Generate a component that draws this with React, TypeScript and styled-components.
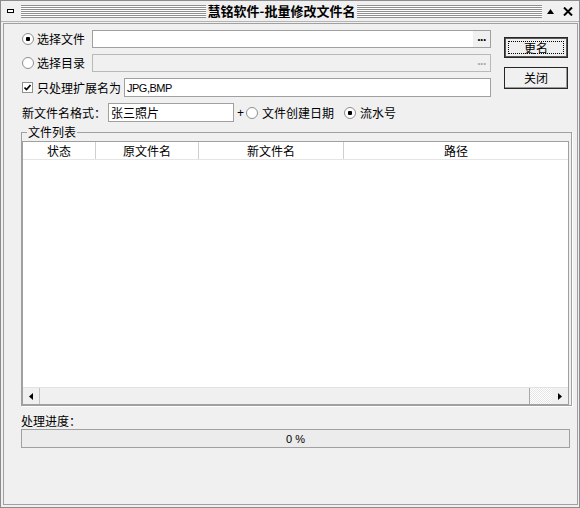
import React from 'react';
import styled, { createGlobalStyle, css } from 'styled-components';

const CJK = `"Noto Sans CJK SC", "Liberation Sans", sans-serif`;
const LATIN = `"Liberation Sans", "Noto Sans CJK SC", sans-serif`;

const GlobalStyle = createGlobalStyle`
  body {
    margin: 0;
    background: #f0f0f0;
  }
  * {
    box-sizing: border-box;
  }
`;

const Window = styled.div`
  width: 580px;
  height: 508px;
  display: flex;
  flex-direction: column;
  background: #f0f0f0;
  border: 1px solid #8c8c8c;
  font: 12px/14px ${CJK};
  color: #000;
`;

const TitleBar = styled.div`
  height: 21px;
  display: flex;
  align-items: center;
  padding: 0 6px 0 6px;
  border-bottom: 1px solid #b4b4b4;
`;

const MenuBox = styled.div`
  width: 7px;
  height: 4px;
  border: 1px solid #000;
  background: #fff;
  margin-right: 7px;
`;

const Stripes = styled.div`
  flex: 1;
  height: 13px;
  background: repeating-linear-gradient(to bottom, #8f8f8f 0 1px, #fff 1px 2px);
`;

const Title = styled.div`
  font-weight: bold;
  font-size: 13px;
  padding: 0 2px;
`;

const TitleButton = styled.div<{ $gap: number }>`
  display: flex;
  align-items: center;
  margin-left: ${(p) => p.$gap}px;
`;

const Client = styled.div`
  flex: 1;
  margin: 1px 1px 2px 2px;
  border: 1px solid #a0a0a0;
  padding: 6px 5px 0 17px;
  display: flex;
  flex-direction: column;
`;

const TopSection = styled.div`
  display: flex;
  gap: 13px;
  padding: 0 4px 0 1px;
`;

const Fields = styled.div`
  flex: 1;
  display: flex;
  flex-direction: column;
  gap: 6px;
`;

const Row = styled.div<{ $h: number }>`
  height: ${(p) => p.$h}px;
  display: flex;
  align-items: center;
`;

const Option = styled.label<{ $width?: number; $gap?: number }>`
  display: flex;
  align-items: center;
  gap: ${(p) => p.$gap ?? 3}px;
  white-space: nowrap;
  ${(p) =>
    p.$width &&
    css`
      width: ${p.$width}px;
    `}
`;

const Radio = styled.span<{ $checked?: boolean; $ml?: number }>`
  width: 12px;
  height: 12px;
  border-radius: 50%;
  border: 1px solid #8e8f8f;
  background: ${(p) =>
    p.$checked ? 'radial-gradient(circle, #000 0 2px, #fff 2.5px)' : '#fff'};
  margin-left: ${(p) => p.$ml ?? 0}px;
  flex: none;
`;

const Check = styled.span`
  width: 11px;
  height: 11px;
  border: 1px solid #8e8f8f;
  background: #fff;
  display: flex;
  align-items: center;
  justify-content: center;
  flex: none;
`;

const TextBox = styled.div<{ $disabled?: boolean; $width?: number; $ml?: number }>`
  height: 100%;
  display: flex;
  align-items: center;
  border: 1px solid ${(p) => (p.$disabled ? '#b9b9b9' : '#a0a0a0')};
  background: ${(p) => (p.$disabled ? '#f0f0f0' : '#fff')};
  margin-left: ${(p) => p.$ml ?? 0}px;
  padding-left: 2px;
  ${(p) =>
    p.$width
      ? css`
          width: ${p.$width}px;
        `
      : css`
          flex: 1;
        `}
`;

const Value = styled.span<{ $latin?: boolean }>`
  flex: 1;
  ${(p) =>
    p.$latin &&
    css`
      font: 11px/14px ${LATIN};
      letter-spacing: -0.5px;
    `}
`;

const Ellipsis = styled.span<{ $disabled?: boolean }>`
  width: 17px;
  height: 100%;
  display: flex;
  align-items: center;
  justify-content: center;
  background: #f0f0f0;
  font: bold 12px/10px ${LATIN};
  letter-spacing: -0.5px;
  color: ${(p) => (p.$disabled ? '#a8a8a8' : '#000')};
  padding-bottom: 4px;
`;

const Plus = styled.span`
  font: 12px/14px ${LATIN};
  margin: 0 2px 0 3px;
`;

const Buttons = styled.div`
  width: 64px;
  display: flex;
  flex-direction: column;
  gap: 9px;
  padding-top: 7px;
`;

const Button = styled.button<{ $default?: boolean; $h: number }>`
  position: relative;
  height: ${(p) => p.$h}px;
  width: 100%;
  padding: 0;
  font: 12px/14px ${CJK};
  color: #000;
  background: #f0f0f0;
  border: 1px solid #262626;
  box-shadow: ${(p) => (p.$default ? 'inset 0 0 0 1px #5a5a5a' : 'inset -1px -1px 0 #9a9a9a')};
  ${(p) =>
    p.$default &&
    css`
      &::after {
        content: '';
        position: absolute;
        inset: 3px;
        border: 1px dotted #000;
      }
    `}
`;

const Group = styled.fieldset`
  margin: 2px 0 0 0;
  padding: 1px 2px 0 0;
  border: 1px solid #a0a0a0;
  box-shadow: 1px 1px 0 #fff;
  min-width: 0;
`;

const Legend = styled.legend`
  margin-left: 5px;
  padding: 0 1px;
  line-height: 16px;
`;

const ListView = styled.div`
  height: 264px;
  border: 1px solid #a0a0a0;
  display: flex;
  flex-direction: column;
  background: #fff;
`;

const Header = styled.div`
  height: 18px;
  display: flex;
  border-bottom: 1px solid #e5e5e5;
`;

const HeaderCell = styled.div<{ $width?: number }>`
  display: flex;
  align-items: center;
  justify-content: center;
  border-right: 1px solid #cfcfcf;
  ${(p) =>
    p.$width
      ? css`
          width: ${p.$width}px;
        `
      : css`
          flex: 1;
          border-right: none;
        `}
`;

const ListBody = styled.div`
  flex: 1;
  background: #fff;
`;

const ScrollBar = styled.div`
  height: 17px;
  display: flex;
  background: #f0f0f0;
  border-top: 1px solid #e2e2e2;
`;

const ScrollButton = styled.div`
  width: 16px;
  display: flex;
  align-items: center;
  justify-content: center;
`;

const Thumb = styled.div`
  flex: 1;
  border-left: 1px solid #c4c4c4;
  border-right: 1px solid #a8a8a8;
  background: #f0f0f0;
`;

const Track = styled.div`
  width: 22px;
  background: repeating-conic-gradient(#fff 0 25%, #e6e6e6 0 50%) 0 0 / 2px 2px;
`;

const ProgressLabel = styled.div`
  margin-top: 8px;
  line-height: 14px;
`;

const Progress = styled.div`
  margin: 1px 2px 0 0;
  height: 19px;
  border: 1px solid #a0a0a0;
  background: #ececec;
  display: flex;
  align-items: center;
  justify-content: center;
  font: 11px/14px ${LATIN};
`;

const columns = [
  { title: '状态', width: 73 },
  { title: '原文件名', width: 103 },
  { title: '新文件名', width: 145 },
  { title: '路径' },
];

const Arrow = ({ dir }: { dir: 'left' | 'right' }) => (
  <svg width="4" height="7" viewBox="0 0 4 7">
    <polygon points={dir === 'left' ? '4,0 4,7 0,3.5' : '0,0 0,7 4,3.5'} fill="#000" />
  </svg>
);

export default function App() {
  return (
    <>
      <GlobalStyle />
      <Window>
        <TitleBar>
          <MenuBox />
          <Stripes />
          <Title>慧铭软件-批量修改文件名</Title>
          <Stripes />
          <TitleButton $gap={5}>
            <svg width="7" height="5" viewBox="0 0 7 5">
              <polygon points="0,5 7,5 3.5,0" fill="#000" />
            </svg>
          </TitleButton>
          <TitleButton $gap={9}>
            <svg width="10" height="9" viewBox="0 0 10 9">
              <path d="M1 0.5 L9 8.5 M9 0.5 L1 8.5" stroke="#000" strokeWidth="2" />
            </svg>
          </TitleButton>
        </TitleBar>
        <Client>
          <TopSection>
            <Fields>
              <Row $h={18}>
                <Option $width={70}>
                  <Radio $checked />
                  选择文件
                </Option>
                <TextBox>
                  <Value />
                  <Ellipsis>...</Ellipsis>
                </TextBox>
              </Row>
              <Row $h={18}>
                <Option $width={70}>
                  <Radio />
                  选择目录
                </Option>
                <TextBox $disabled>
                  <Value />
                  <Ellipsis $disabled>...</Ellipsis>
                </TextBox>
              </Row>
              <Row $h={19}>
                <Option $gap={4}>
                  <Check>
                    <svg width="7" height="7" viewBox="0 0 7 7">
                      <path d="M0.5 3.5 L2.5 5.5 L6.5 1" stroke="#000" strokeWidth="1.6" fill="none" />
                    </svg>
                  </Check>
                  只处理扩展名为
                </Option>
                <TextBox $ml={3}>
                  <Value $latin>JPG,BMP</Value>
                </TextBox>
              </Row>
              <Row $h={19}>
                <Option>新文件名格式：</Option>
                <TextBox $width={126} $ml={2}>
                  <Value>张三照片</Value>
                </TextBox>
                <Plus>+</Plus>
                <Option $gap={4}>
                  <Radio />
                  文件创建日期
                </Option>
                <Option $gap={4}>
                  <Radio $checked $ml={10} />
                  流水号
                </Option>
              </Row>
            </Fields>
            <Buttons>
              <Button $default $h={21}>更名</Button>
              <Button $h={22}>关闭</Button>
            </Buttons>
          </TopSection>
          <Group>
            <Legend>文件列表</Legend>
            <ListView>
              <Header>
                {columns.map((c) => (
                  <HeaderCell key={c.title} $width={c.width}>
                    {c.title}
                  </HeaderCell>
                ))}
              </Header>
              <ListBody />
              <ScrollBar>
                <ScrollButton>
                  <Arrow dir="left" />
                </ScrollButton>
                <Thumb />
                <Track />
                <ScrollButton>
                  <Arrow dir="right" />
                </ScrollButton>
              </ScrollBar>
            </ListView>
          </Group>
          <ProgressLabel>处理进度：</ProgressLabel>
          <Progress>0 %</Progress>
        </Client>
      </Window>
    </>
  );
}
